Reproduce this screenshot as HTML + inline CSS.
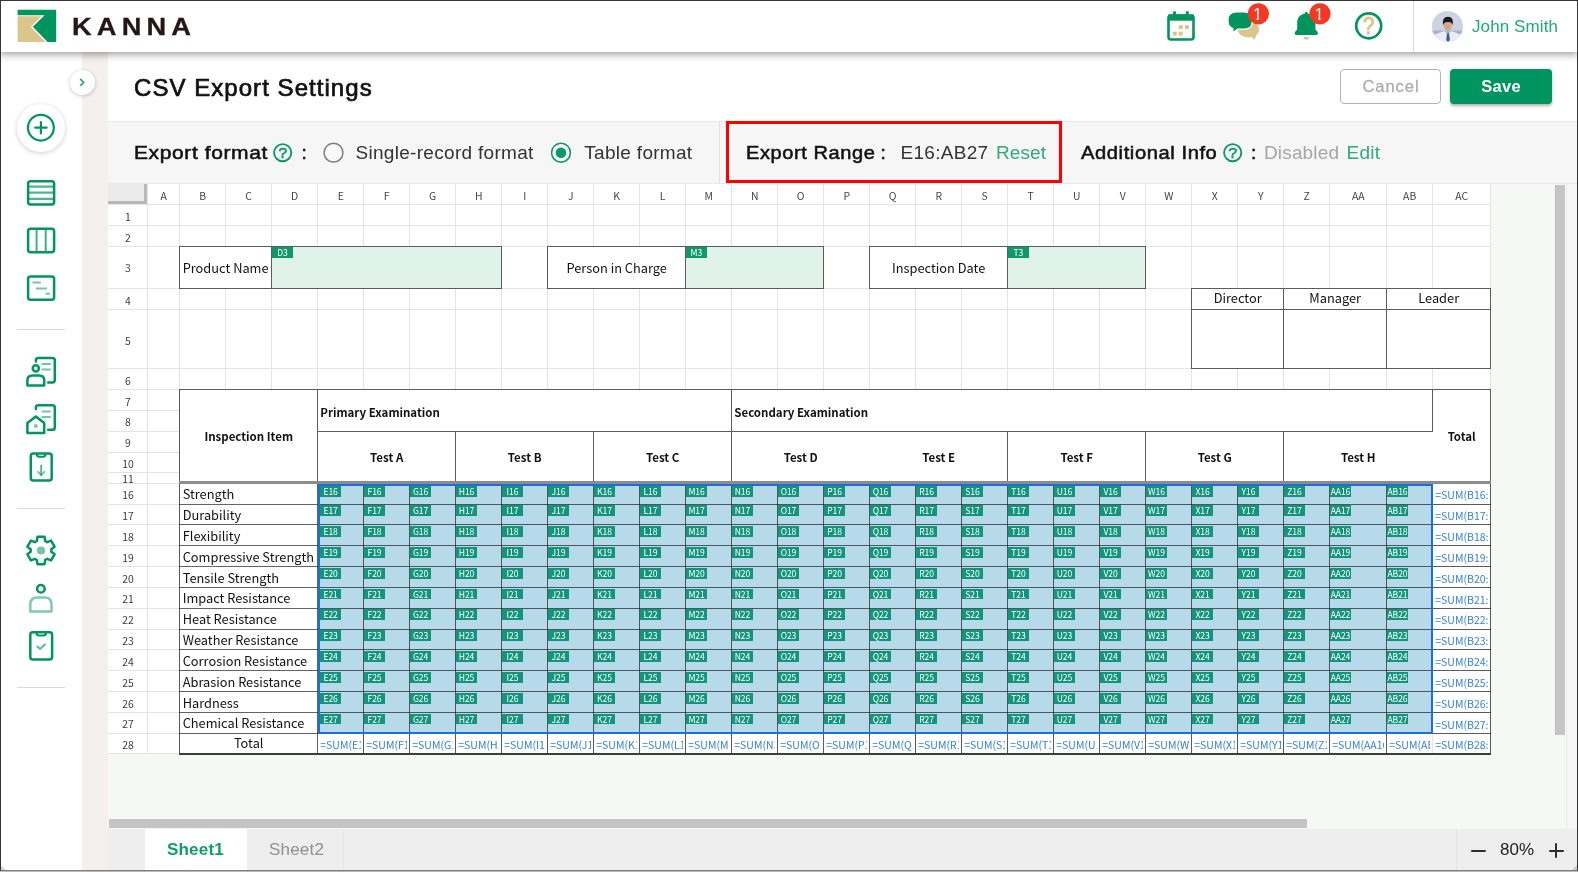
<!DOCTYPE html>
<html lang="en"><head><meta charset="utf-8"><title>CSV Export Settings</title>
<style>
*{box-sizing:border-box;margin:0;padding:0}
html,body{width:1578px;height:872px;overflow:hidden;background:#fff}
body{font-family:"Liberation Sans",sans-serif;color:#111}
#app{position:relative;width:1578px;height:872px;overflow:hidden;will-change:transform}
.abs{position:absolute}
/* frame border of screenshot */
#frame{position:absolute;left:0;top:0;width:1578px;height:871px;border:1px solid #353535;border-bottom-color:#7e7e7e;border-radius:0;z-index:100;pointer-events:none}
#frame2{position:absolute;left:0;top:871px;width:1578px;height:1px;background:#b9b9b9;z-index:99}
/* header */
#hdr{position:absolute;left:0;top:0;width:1578px;height:52px;background:#fff;box-shadow:0 2px 8px rgba(0,0,0,.42);z-index:20}
#brand{position:absolute;left:72.4px;top:12px;font-weight:bold;font-size:24.8px;line-height:30px;letter-spacing:4.65px;transform:scaleX(1.1);transform-origin:0 0;-webkit-text-stroke:.3px #231815;color:#231815;white-space:nowrap}
#uname{position:absolute;left:1472px;top:15px;font-size:17px;line-height:24px;color:#1fab75;white-space:nowrap;letter-spacing:.1px}
#udiv{position:absolute;left:1413px;top:0;width:1px;height:52px;background:#d9d9d9}
/* sidebar */
#side{position:absolute;left:0;top:52px;width:82px;height:820px;background:#fff;z-index:5}
#band{position:absolute;left:82px;top:52px;width:26px;height:820px;background:#f3f0ed;z-index:4}
.sdiv{position:absolute;left:17px;width:48px;height:1px;background:#d9d9d9}
#tog{position:absolute;left:70px;top:70px;width:25px;height:25px;border-radius:50%;background:#fff;box-shadow:0 1px 4px rgba(0,0,0,.22);z-index:25}
#plus{position:absolute;left:17px;top:104px;width:48px;height:48px;border-radius:50%;background:#fff;box-shadow:0 1px 5px rgba(0,0,0,.2);z-index:6}
/* title */
#title{position:absolute;left:134px;top:71.6px;font-size:24px;line-height:32px;color:#111;white-space:nowrap;letter-spacing:1.05px;-webkit-text-stroke:.7px #111}
.btn{position:absolute;top:69px;height:35px;border-radius:4px;font-size:16.5px;line-height:34px;text-align:center;white-space:nowrap}
#cancel{left:1340px;width:101px;border:1px solid #b3b3b3;color:#adadad;background:#fff;-webkit-text-stroke:.3px #adadad;letter-spacing:.95px;line-height:32.6px;padding-left:1px}
#save{left:1450px;width:102px;background:#009560;color:#fff;font-weight:bold;box-shadow:0 2px 3px rgba(0,0,0,.3);letter-spacing:.3px}
/* toolbar */
#tb{position:absolute;left:108px;top:121px;width:1470px;height:63px;background:#f6f6f6;border-top:1.5px solid #e9e9e9;border-bottom:1px solid #e7e7e7}
.tl{position:absolute;top:139px;font-size:19px;line-height:28px;white-space:nowrap;letter-spacing:.3px;color:#333}
.tl.b{color:#111;-webkit-text-stroke:.55px #111;letter-spacing:.55px;transform-origin:0 50%}
.tl.g{color:#2eab77}
.tl.d{color:#a6a6a6}
#redbox{position:absolute;left:726px;top:121px;width:336px;height:62px;border:3px solid #ff0000}
#tbdiv{position:absolute;left:719px;top:122px;width:1px;height:62px;background:#e2e2e2}
/* grid */
#sheet{position:absolute;left:108px;top:184px;width:1470px;height:646px;background:#f6f8f6;overflow:hidden;font-family:"Noto Sans CJK JP","Liberation Sans",sans-serif}
#sheet .w{position:absolute;background:#fff}
.vl,.hl{position:absolute;background:#e4e4e4}
.ch{position:absolute;top:1px;height:21px;font-size:10.4px;line-height:22.4px;text-align:center;color:#444}
.rh{position:absolute;left:0;width:40px;font-size:10.4px;text-align:center;color:#3c3c3c}
.c{position:absolute;font-size:12.8px;color:#111;white-space:nowrap;overflow:hidden}
.c.s,.c[style*=bold]{font-size:11.5px}
.bx{position:absolute;border:1px solid #5c5c5c}
.lb{position:absolute;width:20.6px;height:10.8px;background:#0d9a68;color:#fff;font-size:8.6px;line-height:10.6px;white-space:nowrap;overflow:hidden;text-align:center;letter-spacing:-.1px}
.lb span{display:inline-block;margin:0 -6px}
.sel .lb{background:#12957a}
.fm{position:absolute;font-size:10.5px;color:#3583dc;white-space:nowrap;overflow:hidden}
.bl{position:absolute;background:rgba(20,20,20,.66)}
/* bottom */
#tabs{position:absolute;left:108px;top:829px;width:1470px;height:43px;background:#eeeeee}

</style></head>
<body>
<div id="app">
<!-- ===== header ===== -->
<div id="hdr">
  <svg class="abs" style="left:17px;top:9px" width="40" height="34" viewBox="17 9 40 34">
    <polygon points="17.6,9.8 56.2,9.8 56.2,41.9 47.6,41.9 32.8,26.7 44.6,15.3 17.6,15.3" fill="#00945e"/>
    <polygon points="17.6,16.3 41.4,16.3 30.8,26.7 45.5,41.9 17.6,41.9" fill="#dcc58b"/>
  </svg>
  <div id="brand">KANNA</div>

  <!-- calendar -->
  <svg class="abs" style="left:1165px;top:9px" width="32" height="34" viewBox="1165 9 32 34">
    <rect x="1168.5" y="15.5" width="25" height="24" rx="2.5" fill="#fff" stroke="#00955f" stroke-width="2.6"/>
    <rect x="1168" y="14.5" width="26" height="6.2" fill="#00955f"/>
    <rect x="1173" y="11.3" width="3" height="5" rx="1" fill="#00955f"/>
    <rect x="1185.8" y="11.3" width="3" height="5" rx="1" fill="#00955f"/>
    <rect x="1178.8" y="25.2" width="3.9" height="3.9" fill="#dcc58b"/>
    <rect x="1185" y="25.2" width="3.9" height="3.9" fill="#dcc58b"/>
    <rect x="1172.8" y="31.7" width="3.9" height="3.9" fill="#dcc58b"/>
    <rect x="1178.8" y="31.7" width="3.9" height="3.9" fill="#dcc58b"/>
  </svg>
  <!-- chat -->
  <svg class="abs" style="left:1225px;top:2px" width="46" height="44" viewBox="1225 2 46 44">
    <path d="M1248.5 21.6 C1254.4 21.6 1259.2 25.1 1259.2 29.5 C1259.2 31.8 1258 33.8 1256.2 35.2 L1254.7 39.7 L1251.6 37.1 C1250.6 37.3 1249.6 37.4 1248.5 37.4 C1242.6 37.4 1237.8 33.9 1237.8 29.5 C1237.8 25.1 1242.6 21.6 1248.5 21.6 Z" fill="#dcc58b"/>
    <path d="M1236.4 11.9 H1244.2 C1249.6 11.9 1252.3 15.2 1252.3 19.2 V21.8 C1252.3 25.8 1249.6 29.1 1244.2 29.1 H1237.8 L1232.5 32.7 L1232.9 28.5 C1229.6 27.4 1228 24.8 1228 21.8 V19.2 C1228 15.2 1231 11.9 1236.4 11.9 Z" fill="#00955f" stroke="#fff" stroke-width="1.3"/>
    <circle cx="1258.4" cy="13.8" r="10.6" fill="#f23a22"/>
    <clipPath id="k1"><path d="M1250 5 H1266 V18.2 H1258.9 V21 H1256.5 V18.2 H1250 Z"/></clipPath><text x="1257.6" y="19.9" font-family="'Liberation Sans',sans-serif" font-size="15.8" fill="#fff" text-anchor="middle" clip-path="url(#k1)">1</text>
  </svg>
  <!-- bell -->
  <svg class="abs" style="left:1290px;top:2px" width="44" height="44" viewBox="1290 2 44 44">
    <path d="M1303.3 37 H1309.3 C1309.3 38.6 1308 39.7 1306.3 39.7 C1304.6 39.7 1303.3 38.6 1303.3 37 Z" fill="#dcc58b"/>
    <path d="M1304.9 13.6 C1304.9 12.4 1305.5 11.7 1306.3 11.7 C1307.1 11.7 1307.7 12.4 1307.7 13.6 C1312.3 14.6 1315.4 17.8 1315.4 22.5 V28.5 C1315.4 29.8 1316.3 30.6 1317.2 31.6 C1318.3 32.8 1318.2 35.1 1316.2 35.1 H1296.4 C1294.4 35.1 1294.3 32.8 1295.4 31.6 C1296.3 30.6 1297.2 29.8 1297.2 28.5 V22.5 C1297.2 17.8 1300.3 14.6 1304.9 13.6 Z" fill="#00955f"/>
    <circle cx="1320" cy="13.8" r="10.6" fill="#f23a22"/>
    <clipPath id="k2"><path d="M1311 5 H1328 V18.2 H1320.5 V21 H1318.1 V18.2 H1311 Z"/></clipPath><text x="1319.2" y="19.9" font-family="'Liberation Sans',sans-serif" font-size="15.8" fill="#fff" text-anchor="middle" clip-path="url(#k2)">1</text>
  </svg>
  <!-- help -->
  <svg class="abs" style="left:1352px;top:9px" width="34" height="34" viewBox="1352 9 34 34">
    <circle cx="1368.7" cy="25.8" r="12.5" fill="#fff" stroke="#00955f" stroke-width="2.7"/>
    <text transform="translate(1368.8,34.3) scale(1,1.19)" x="0" y="0" font-family="'Liberation Sans',sans-serif" font-size="20.5" fill="#dcc58b" stroke="#dcc58b" stroke-width=".8" text-anchor="middle">?</text>
  </svg>
  <div id="udiv"></div>
  <!-- avatar -->
  <svg class="abs" style="left:1431px;top:10px" width="33" height="33" viewBox="0 0 33 33">
    <defs><clipPath id="avc"><circle cx="16.4" cy="16.5" r="15.5"/></clipPath></defs>
    <g clip-path="url(#avc)">
      <rect x="0" y="0" width="33" height="33" fill="#cdd2e0"/>
      <rect x="0" y="20.6" width="33" height="3.4" fill="#9db4d2"/>
      <path d="M1 33 L3 25.4 C6 22.9 10.4 22.6 13.4 21 L16.9 24.4 L20.4 21 C23.4 22.6 27 22.9 30 25.4 L32 33 Z" fill="#e9ecf2"/>
      <path d="M16 23.2 L18 23.2 L18.9 30 L17 32 L15.2 30 Z" fill="#3d5a9a"/>
      <ellipse cx="16.8" cy="15.9" rx="3.8" ry="4.6" fill="#d6a488"/>
      <path d="M12.3 15.6 C10.9 10 13.2 6.8 17 6.8 C20.8 6.8 22.8 10 21.5 15.6 C21 13.2 20.2 11.8 17 12 C13.8 11.8 12.9 13.2 12.3 15.6 Z" fill="#1c1a1d"/>
    </g>
  </svg>
  <div id="uname">John Smith</div>
</div>

<!-- ===== sidebar ===== -->
<div id="side"></div>
<div id="band"></div>
<div id="tog"><svg width="25" height="25" viewBox="0 0 25 25"><path d="M10.6 9.3 L13.8 12.3 L10.6 15.3" fill="none" stroke="#2aa574" stroke-width="1.6" stroke-linecap="round" stroke-linejoin="round"/></svg></div>
<div id="plus"><svg width="48" height="48" viewBox="0 0 48 48"><circle cx="23.9" cy="23.7" r="12.9" fill="none" stroke="#00955f" stroke-width="2.2"/><path d="M18.2 23.7 H29.6 M23.9 18 V29.4" stroke="#00955f" stroke-width="2.2" stroke-linecap="round"/></svg></div>

<svg class="abs" style="left:0;top:170px;z-index:6" width="82" height="530" viewBox="0 170 82 530" fill="none" stroke="#00955f" stroke-width="2.5" stroke-linejoin="round" stroke-linecap="round">
  <!-- list -->
  <rect x="28.1" y="181.2" width="26" height="23.3" rx="2.5"/>
  <g stroke-width="2.3" opacity=".7" stroke-linecap="butt"><path d="M29 186.6 H53 M29 192.7 H53 M29 198.9 H53"/></g>
  <!-- columns -->
  <rect x="28.1" y="228.7" width="26" height="23.6" rx="2.5"/>
  <g stroke-width="2" opacity=".75" stroke-linecap="butt"><path d="M36.6 229.5 V251.5 M45.7 229.5 V251.5"/></g>
  <!-- gantt -->
  <rect x="28.1" y="276.4" width="26" height="23.3" rx="2.5"/>
  <g stroke-width="2" opacity=".55" stroke-linecap="butt"><path d="M32.5 282.4 H40.8 M36 288.4 H46.8 M45.6 293.8 H49.9"/></g>
  <!-- person + doc -->
  <path d="M35.9 361.5 V360.3 Q35.9 357.9 38.3 357.9 H52.4 Q54.8 357.9 54.8 360.3 V380 Q54.8 382.4 52.4 382.4 H48.2"/>
  <g stroke-width="2" opacity=".55" stroke-linecap="butt"><path d="M41.6 364.1 H50.8 M41.6 369.6 H50.8"/></g>
  <circle cx="35.8" cy="368.3" r="3.1"/>
  <path d="M27.4 385.4 V380.4 Q27.4 375.4 32.4 375.4 H39.2 Q44.2 375.4 44.2 380.4 V385.4 Z"/>
  <!-- house + doc -->
  <path d="M35.9 408.9 V407.7 Q35.9 405.3 38.3 405.3 H52.4 Q54.8 405.3 54.8 407.7 V427.4 Q54.8 429.8 52.4 429.8 H48.2"/>
  <g stroke-width="2" opacity=".55" stroke-linecap="butt"><path d="M41.6 411.5 H50.8 M41.6 417 H50.8"/></g>
  <path d="M27.4 433 V423 L35.8 416.6 L44.2 423 V433 Z"/>
  <rect x="34.1" y="424.3" width="3.4" height="3.4" fill="#00955f" stroke="none" opacity=".55"/>
  <!-- clipboard down -->
  <rect x="30.8" y="453.5" width="20.9" height="27" rx="2.5"/>
  <path d="M36.8 454 Q36.8 456.8 39.4 456.8 H43 Q45.6 456.8 45.6 454" stroke-width="2"/>
  <path d="M41.2 465.5 V475" stroke-width="1.8" opacity=".7"/>
  <path d="M37.9 471.8 L41.2 475.2 L44.5 471.8" stroke-width="1.8" opacity=".55"/>
  <!-- gear -->
  <path d="M36.85 540.96 L37.47 536.85 L44.53 536.85 L45.15 540.96 L47.19 542.14 L51.06 540.62 L54.59 546.73 L51.33 549.32 L51.33 551.68 L54.59 554.27 L51.06 560.38 L47.19 558.86 L45.15 560.04 L44.53 564.15 L37.47 564.15 L36.85 560.04 L34.81 558.86 L30.94 560.38 L27.41 554.27 L30.67 551.68 L30.67 549.32 L27.41 546.73 L30.94 540.62 L34.81 542.14 Z"/>
  <circle cx="41" cy="550.5" r="4.1" fill="#00955f" stroke="none" opacity=".55"/>
  <!-- person -->
  <circle cx="40.9" cy="588.7" r="3.8"/>
  <path d="M30.3 611.5 V604.5 Q30.3 597.6 37.3 597.6 H44.5 Q51.5 597.6 51.5 604.5 V611.5 Z" opacity=".5"/>
  <!-- clipboard check -->
  <rect x="30.3" y="632.3" width="21.8" height="27.2" rx="2.5"/>
  <path d="M36.4 632.8 Q36.4 635.6 39 635.6 H43.4 Q46 635.6 46 632.8" stroke-width="2"/>
  <path d="M37.6 646.6 L40 649 L45 644.4" stroke-width="2.2" opacity=".6"/>
</svg>
<div class="sdiv" style="top:329px;z-index:6"></div>
<div class="sdiv" style="top:508px;z-index:6"></div>
<div class="sdiv" style="top:687px;z-index:6"></div>

<!-- ===== title ===== -->
<div id="title">CSV Export Settings</div>
<div id="cancel" class="btn">Cancel</div>
<div id="save" class="btn">Save</div>

<!-- ===== toolbar ===== -->
<div id="tb"></div>
<div id="tbdiv"></div>
<div class="tl b" style="left:134px;transform:scaleX(1.105)">Export format</div>
<svg class="abs" style="left:272px;top:142px" width="22" height="22" viewBox="0 0 22 22"><circle cx="10.7" cy="10.7" r="8.6" fill="none" stroke="#0b9a66" stroke-width="1.9"/><text x="10.8" y="16.2" font-family="'Liberation Sans',sans-serif" font-size="15.4" fill="#0b9a66" stroke="#0b9a66" stroke-width=".6" text-anchor="middle">?</text></svg>
<div class="tl b" style="left:301.5px">:</div>
<svg class="abs" style="left:322px;top:141px" width="24" height="24" viewBox="0 0 24 24"><circle cx="11.5" cy="11.7" r="9.4" fill="#f9f9f9" stroke="#7d7d7d" stroke-width="1.5"/></svg>
<div class="tl" style="left:355.5px">Single-record format</div>
<svg class="abs" style="left:549px;top:141px" width="24" height="24" viewBox="0 0 24 24"><circle cx="12" cy="11.7" r="9.4" fill="#fff" stroke="#0b9a66" stroke-width="1.6"/><circle cx="12" cy="11.7" r="5.3" fill="#0b9a66"/></svg>
<div class="tl" style="left:584.3px">Table format</div>
<div id="redbox"></div>
<div class="tl b" style="left:746.4px;transform:scaleX(1.055)">Export Range</div><div class="tl b" style="left:880.5px">:</div>
<div class="tl" style="left:900.5px">E16:AB27</div>
<div class="tl g" style="left:996px;letter-spacing:.1px">Reset</div>
<div class="tl b" style="left:1080.6px;transform:scaleX(1.06)">Additional Info</div>
<svg class="abs" style="left:1221.5px;top:142px" width="22" height="22" viewBox="0 0 22 22"><circle cx="10.7" cy="10.7" r="8.6" fill="none" stroke="#0b9a66" stroke-width="1.9"/><text x="10.8" y="16.2" font-family="'Liberation Sans',sans-serif" font-size="15.4" fill="#0b9a66" stroke="#0b9a66" stroke-width=".6" text-anchor="middle">?</text></svg>
<div class="tl b" style="left:1251px">:</div>
<div class="tl d" style="left:1264px;letter-spacing:.15px">Disabled</div>
<div class="tl g" style="left:1346.5px">Edit</div>
<div id="sheet">
<div class="w" style="left:0;top:0;width:1383px;height:570px"></div>
<div class="abs" style="left:0;top:0;width:40px;height:20.6px;background:#ebebeb;border-right:4px solid #b9b9bb;border-bottom:4px solid #b8b8b8"></div>
<div class="vl" style="left:71px;top:0;width:1px;height:570px"></div><div class="vl" style="left:117px;top:0;width:1px;height:570px"></div><div class="vl" style="left:163px;top:0;width:1px;height:570px"></div><div class="vl" style="left:209px;top:0;width:1px;height:570px"></div><div class="vl" style="left:255px;top:0;width:1px;height:570px"></div><div class="vl" style="left:301px;top:0;width:1px;height:570px"></div><div class="vl" style="left:347px;top:0;width:1px;height:570px"></div><div class="vl" style="left:393px;top:0;width:1px;height:570px"></div><div class="vl" style="left:439px;top:0;width:1px;height:570px"></div><div class="vl" style="left:485px;top:0;width:1px;height:570px"></div><div class="vl" style="left:531px;top:0;width:1px;height:570px"></div><div class="vl" style="left:577px;top:0;width:1px;height:570px"></div><div class="vl" style="left:623px;top:0;width:1px;height:570px"></div><div class="vl" style="left:669px;top:0;width:1px;height:570px"></div><div class="vl" style="left:715px;top:0;width:1px;height:570px"></div><div class="vl" style="left:761px;top:0;width:1px;height:570px"></div><div class="vl" style="left:807px;top:0;width:1px;height:570px"></div><div class="vl" style="left:853px;top:0;width:1px;height:570px"></div><div class="vl" style="left:899px;top:0;width:1px;height:570px"></div><div class="vl" style="left:945px;top:0;width:1px;height:570px"></div><div class="vl" style="left:991px;top:0;width:1px;height:570px"></div><div class="vl" style="left:1037px;top:0;width:1px;height:570px"></div><div class="vl" style="left:1083px;top:0;width:1px;height:570px"></div><div class="vl" style="left:1129px;top:0;width:1px;height:570px"></div><div class="vl" style="left:1175px;top:0;width:1px;height:570px"></div><div class="vl" style="left:1221px;top:0;width:1px;height:570px"></div><div class="vl" style="left:1278px;top:0;width:1px;height:570px"></div><div class="vl" style="left:1324px;top:0;width:1px;height:570px"></div><div class="vl" style="left:1382px;top:0;width:1px;height:570px"></div><div class="vl" style="left:39px;top:0;width:1px;height:570px"></div>
<div class="hl" style="left:0;top:20px;width:1383px;height:1px"></div><div class="hl" style="left:0;top:41px;width:1383px;height:1px"></div><div class="hl" style="left:0;top:62px;width:1383px;height:1px"></div><div class="hl" style="left:0;top:104px;width:1383px;height:1px"></div><div class="hl" style="left:0;top:125px;width:1383px;height:1px"></div><div class="hl" style="left:0;top:184px;width:1383px;height:1px"></div><div class="hl" style="left:0;top:205px;width:1383px;height:1px"></div><div class="hl" style="left:0;top:226px;width:1383px;height:1px"></div><div class="hl" style="left:0;top:247px;width:1383px;height:1px"></div><div class="hl" style="left:0;top:268px;width:1383px;height:1px"></div><div class="hl" style="left:0;top:288px;width:1383px;height:1px"></div><div class="hl" style="left:0;top:299px;width:1383px;height:1px"></div><div class="hl" style="left:0;top:320px;width:1383px;height:1px"></div><div class="hl" style="left:0;top:340px;width:1383px;height:1px"></div><div class="hl" style="left:0;top:361px;width:1383px;height:1px"></div><div class="hl" style="left:0;top:382px;width:1383px;height:1px"></div><div class="hl" style="left:0;top:403px;width:1383px;height:1px"></div><div class="hl" style="left:0;top:424px;width:1383px;height:1px"></div><div class="hl" style="left:0;top:445px;width:1383px;height:1px"></div><div class="hl" style="left:0;top:465px;width:1383px;height:1px"></div><div class="hl" style="left:0;top:486px;width:1383px;height:1px"></div><div class="hl" style="left:0;top:507px;width:1383px;height:1px"></div><div class="hl" style="left:0;top:528px;width:1383px;height:1px"></div><div class="hl" style="left:0;top:549px;width:1383px;height:1px"></div><div class="hl" style="left:0;top:569px;width:1383px;height:1px"></div>
<div class="ch" style="left:39.7px;width:32px">A</div><div class="ch" style="left:71.7px;width:46px">B</div><div class="ch" style="left:117.7px;width:46px">C</div><div class="ch" style="left:163.7px;width:46px">D</div><div class="ch" style="left:209.7px;width:46px">E</div><div class="ch" style="left:255.7px;width:46px">F</div><div class="ch" style="left:301.7px;width:46px">G</div><div class="ch" style="left:347.7px;width:46px">H</div><div class="ch" style="left:393.7px;width:46px">I</div><div class="ch" style="left:439.7px;width:46px">J</div><div class="ch" style="left:485.7px;width:46px">K</div><div class="ch" style="left:531.7px;width:46px">L</div><div class="ch" style="left:577.7px;width:46px">M</div><div class="ch" style="left:623.7px;width:46px">N</div><div class="ch" style="left:669.7px;width:46px">O</div><div class="ch" style="left:715.7px;width:46px">P</div><div class="ch" style="left:761.7px;width:46px">Q</div><div class="ch" style="left:807.7px;width:46px">R</div><div class="ch" style="left:853.7px;width:46px">S</div><div class="ch" style="left:899.7px;width:46px">T</div><div class="ch" style="left:945.7px;width:46px">U</div><div class="ch" style="left:991.7px;width:46px">V</div><div class="ch" style="left:1037.7px;width:46px">W</div><div class="ch" style="left:1083.7px;width:46px">X</div><div class="ch" style="left:1129.7px;width:46px">Y</div><div class="ch" style="left:1175.7px;width:46px">Z</div><div class="ch" style="left:1221.7px;width:57px">AA</div><div class="ch" style="left:1278.7px;width:46px">AB</div><div class="ch" style="left:1324.7px;width:58px">AC</div>
<div class="rh" style="top:20.8px;height:20.8px;line-height:23px">1</div><div class="rh" style="top:41.6px;height:20.8px;line-height:23px">2</div><div class="rh" style="top:62.4px;height:42.4px;line-height:44.6px">3</div><div class="rh" style="top:104.8px;height:20.8px;line-height:23px">4</div><div class="rh" style="top:125.6px;height:59.2px;line-height:61.4px">5</div><div class="rh" style="top:184.8px;height:20.8px;line-height:23px">6</div><div class="rh" style="top:205.6px;height:20.8px;line-height:23px">7</div><div class="rh" style="top:226.4px;height:20.8px;line-height:23px">8</div><div class="rh" style="top:247.2px;height:20.8px;line-height:23px">9</div><div class="rh" style="top:268px;height:20.8px;line-height:23px">10</div><div class="rh" style="top:288.8px;height:10.4px;line-height:12.6px;overflow:hidden">11</div><div class="rh" style="top:299.2px;height:20.83px;line-height:23.03px">16</div><div class="rh" style="top:320.03px;height:20.83px;line-height:23.03px">17</div><div class="rh" style="top:340.86px;height:20.83px;line-height:23.03px">18</div><div class="rh" style="top:361.69px;height:20.83px;line-height:23.03px">19</div><div class="rh" style="top:382.52px;height:20.83px;line-height:23.03px">20</div><div class="rh" style="top:403.35px;height:20.83px;line-height:23.03px">21</div><div class="rh" style="top:424.18px;height:20.83px;line-height:23.03px">22</div><div class="rh" style="top:445.01px;height:20.83px;line-height:23.03px">23</div><div class="rh" style="top:465.84px;height:20.83px;line-height:23.03px">24</div><div class="rh" style="top:486.67px;height:20.83px;line-height:23.03px">25</div><div class="rh" style="top:507.5px;height:20.83px;line-height:23.03px">26</div><div class="rh" style="top:528.33px;height:20.83px;line-height:23.03px">27</div><div class="rh" style="top:549.16px;height:20.83px;line-height:23.03px">28</div>
<div class="bx" style="left:71px;top:62px;width:93px;height:43px;background:#fff"></div><div class="bx" style="left:163px;top:62px;width:231px;height:43px;background:#dff3eb"></div><div class="c" style="left:71.7px;top:63.2px;width:92px;height:42.4px;line-height:42.4px;text-align:left;padding-left:3px">Product Name</div><div class="lb" style="left:164.1px;top:62.8px">D3</div><div class="bx" style="left:439px;top:62px;width:139px;height:43px;background:#fff"></div><div class="bx" style="left:577px;top:62px;width:139px;height:43px;background:#dff3eb"></div><div class="c" style="left:439.7px;top:63.2px;width:138px;height:42.4px;line-height:42.4px;text-align:center">Person in Charge</div><div class="lb" style="left:578.1px;top:62.8px">M3</div><div class="bx" style="left:761px;top:62px;width:139px;height:43px;background:#fff"></div><div class="bx" style="left:899px;top:62px;width:139px;height:43px;background:#dff3eb"></div><div class="c" style="left:761.7px;top:63.2px;width:138px;height:42.4px;line-height:42.4px;text-align:center">Inspection Date</div><div class="lb" style="left:900.1px;top:62.8px">T3</div>
<div class="bx" style="left:1083px;top:104px;width:93px;height:22px;background:#fff"></div><div class="bx" style="left:1083px;top:125px;width:93px;height:60px;background:#fff"></div><div class="c" style="left:1083.7px;top:104.2px;width:92px;height:20.8px;line-height:20.8px;text-align:center">Director</div><div class="bx" style="left:1175px;top:104px;width:104px;height:22px;background:#fff"></div><div class="bx" style="left:1175px;top:125px;width:104px;height:60px;background:#fff"></div><div class="c" style="left:1175.7px;top:104.2px;width:103px;height:20.8px;line-height:20.8px;text-align:center">Manager</div><div class="bx" style="left:1278px;top:104px;width:105px;height:22px;background:#fff"></div><div class="bx" style="left:1278px;top:125px;width:105px;height:60px;background:#fff"></div><div class="c" style="left:1278.7px;top:104.2px;width:104px;height:20.8px;line-height:20.8px;text-align:center">Leader</div>
<div class="bx" style="left:71px;top:205px;width:139px;height:95px;background:#fff"></div><div class="c" style="left:71.7px;top:205.6px;width:138px;height:93.6px;line-height:93.6px;text-align:center;font-weight:bold">Inspection Item</div><div class="bx" style="left:209px;top:205px;width:415px;height:43px;background:#fff"></div><div class="c s" style="left:209.7px;top:207.6px;width:414px;height:41.6px;line-height:41.6px;text-align:left;padding-left:2.6px;font-weight:bold">Primary Examination</div><div class="bx" style="left:623px;top:205px;width:702px;height:43px;background:#fff"></div><div class="c s" style="left:623.7px;top:207.6px;width:701px;height:41.6px;line-height:41.6px;text-align:left;padding-left:2.6px;font-weight:bold">Secondary Examination</div><div class="bx" style="left:209px;top:247px;width:139px;height:53px;background:#fff"></div><div class="c s" style="left:209.7px;top:247.2px;width:138px;height:52px;line-height:52px;text-align:center;font-weight:bold">Test A</div><div class="bx" style="left:347px;top:247px;width:139px;height:53px;background:#fff"></div><div class="c s" style="left:347.7px;top:247.2px;width:138px;height:52px;line-height:52px;text-align:center;font-weight:bold">Test B</div><div class="bx" style="left:485px;top:247px;width:139px;height:53px;background:#fff"></div><div class="c s" style="left:485.7px;top:247.2px;width:138px;height:52px;line-height:52px;text-align:center;font-weight:bold">Test C</div><div class="bx" style="left:623px;top:247px;width:277px;height:53px;background:#fff"></div><div class="c s" style="left:623.7px;top:247.2px;width:138px;height:52px;line-height:52px;text-align:center;font-weight:bold">Test D</div><div class="c s" style="left:761.7px;top:247.2px;width:138px;height:52px;line-height:52px;text-align:center;font-weight:bold">Test E</div><div class="bx" style="left:899px;top:247px;width:139px;height:53px;background:#fff"></div><div class="c s" style="left:899.7px;top:247.2px;width:138px;height:52px;line-height:52px;text-align:center;font-weight:bold">Test F</div><div class="bx" style="left:1037px;top:247px;width:139px;height:53px;background:#fff"></div><div class="c s" style="left:1037.7px;top:247.2px;width:138px;height:52px;line-height:52px;text-align:center;font-weight:bold">Test G</div><div class="bx" style="left:1175px;top:247px;width:150px;height:53px;background:#fff;border-right:none"></div><div class="c s" style="left:1175.7px;top:247.2px;width:149px;height:52px;line-height:52px;text-align:center;font-weight:bold">Test H</div><div class="bx" style="left:1324px;top:205px;width:59px;height:95px;background:#fff;border-left:none"></div><div class="abs" style="left:1324px;top:205px;width:1px;height:43px;background:#5c5c5c"></div><div class="c s" style="left:1324.7px;top:205.6px;width:58px;height:93.6px;line-height:93.6px;text-align:center;font-weight:bold">Total</div>
<div class="abs" style="left:210px;top:299px;width:1115px;height:250px;background:#b6daea"></div>
<div class="abs" style="left:72px;top:299px;width:138px;height:271px;background:#fff"></div>
<div class="bl" style="left:71px;top:320px;width:1312px;height:1px"></div><div class="bl" style="left:71px;top:340px;width:1312px;height:1px"></div><div class="bl" style="left:71px;top:361px;width:1312px;height:1px"></div><div class="bl" style="left:71px;top:382px;width:1312px;height:1px"></div><div class="bl" style="left:71px;top:403px;width:1312px;height:1px"></div><div class="bl" style="left:71px;top:424px;width:1312px;height:1px"></div><div class="bl" style="left:71px;top:445px;width:1312px;height:1px"></div><div class="bl" style="left:71px;top:465px;width:1312px;height:1px"></div><div class="bl" style="left:71px;top:486px;width:1312px;height:1px"></div><div class="bl" style="left:71px;top:507px;width:1312px;height:1px"></div><div class="bl" style="left:71px;top:528px;width:1312px;height:1px"></div><div class="bl" style="left:71px;top:549px;width:1312px;height:1px"></div><div class="bl" style="left:71px;top:569px;width:1312px;height:1px"></div>
<div class="bl" style="left:71px;top:299px;width:1px;height:271px"></div><div class="bl" style="left:209px;top:299px;width:1px;height:271px"></div><div class="bl" style="left:255px;top:299px;width:1px;height:271px"></div><div class="bl" style="left:301px;top:299px;width:1px;height:271px"></div><div class="bl" style="left:347px;top:299px;width:1px;height:271px"></div><div class="bl" style="left:393px;top:299px;width:1px;height:271px"></div><div class="bl" style="left:439px;top:299px;width:1px;height:271px"></div><div class="bl" style="left:485px;top:299px;width:1px;height:271px"></div><div class="bl" style="left:531px;top:299px;width:1px;height:271px"></div><div class="bl" style="left:577px;top:299px;width:1px;height:271px"></div><div class="bl" style="left:623px;top:299px;width:1px;height:271px"></div><div class="bl" style="left:669px;top:299px;width:1px;height:271px"></div><div class="bl" style="left:715px;top:299px;width:1px;height:271px"></div><div class="bl" style="left:761px;top:299px;width:1px;height:271px"></div><div class="bl" style="left:807px;top:299px;width:1px;height:271px"></div><div class="bl" style="left:853px;top:299px;width:1px;height:271px"></div><div class="bl" style="left:899px;top:299px;width:1px;height:271px"></div><div class="bl" style="left:945px;top:299px;width:1px;height:271px"></div><div class="bl" style="left:991px;top:299px;width:1px;height:271px"></div><div class="bl" style="left:1037px;top:299px;width:1px;height:271px"></div><div class="bl" style="left:1083px;top:299px;width:1px;height:271px"></div><div class="bl" style="left:1129px;top:299px;width:1px;height:271px"></div><div class="bl" style="left:1175px;top:299px;width:1px;height:271px"></div><div class="bl" style="left:1221px;top:299px;width:1px;height:271px"></div><div class="bl" style="left:1278px;top:299px;width:1px;height:271px"></div><div class="bl" style="left:1324px;top:299px;width:1px;height:251px"></div><div class="bl" style="left:1382px;top:299px;width:1px;height:271px"></div>
<div class="abs" style="left:71px;top:297.3px;width:1312px;height:2.4px;background:#8c8c8c"></div>
<div class="abs" style="left:71px;top:569.19px;width:1312px;height:2px;background:#3c3c3c"></div>
<div class="c" style="left:71.7px;top:300.2px;width:138px;height:20.83px;line-height:20.83px;text-align:left;padding-left:3px">Strength</div>
<div class="sel"><div class="lb" style="left:212.3px;top:302.1px"><span>E16</span></div><div class="lb" style="left:256.2px;top:302.1px"><span>F16</span></div><div class="lb" style="left:302.2px;top:302.1px"><span>G16</span></div><div class="lb" style="left:348.2px;top:302.1px"><span>H16</span></div><div class="lb" style="left:394.2px;top:302.1px"><span>I16</span></div><div class="lb" style="left:440.2px;top:302.1px"><span>J16</span></div><div class="lb" style="left:486.2px;top:302.1px"><span>K16</span></div><div class="lb" style="left:532.2px;top:302.1px"><span>L16</span></div><div class="lb" style="left:578.2px;top:302.1px"><span>M16</span></div><div class="lb" style="left:624.2px;top:302.1px"><span>N16</span></div><div class="lb" style="left:670.2px;top:302.1px"><span>O16</span></div><div class="lb" style="left:716.2px;top:302.1px"><span>P16</span></div><div class="lb" style="left:762.2px;top:302.1px"><span>Q16</span></div><div class="lb" style="left:808.2px;top:302.1px"><span>R16</span></div><div class="lb" style="left:854.2px;top:302.1px"><span>S16</span></div><div class="lb" style="left:900.2px;top:302.1px"><span>T16</span></div><div class="lb" style="left:946.2px;top:302.1px"><span>U16</span></div><div class="lb" style="left:992.2px;top:302.1px"><span>V16</span></div><div class="lb" style="left:1038.2px;top:302.1px"><span>W16</span></div><div class="lb" style="left:1084.2px;top:302.1px"><span>X16</span></div><div class="lb" style="left:1130.2px;top:302.1px"><span>Y16</span></div><div class="lb" style="left:1176.2px;top:302.1px"><span>Z16</span></div><div class="lb" style="left:1222.2px;top:302.1px"><span>AA16</span></div><div class="lb" style="left:1279.2px;top:302.1px"><span>AB16</span></div></div>
<div class="fm" style="left:1324.7px;top:301.4px;width:55.2px;height:20.83px;line-height:20.83px;text-align:left;padding-left:2.6px">=SUM(B16:AC16)</div><div class="c" style="left:71.7px;top:321.03px;width:138px;height:20.83px;line-height:20.83px;text-align:left;padding-left:3px">Durability</div>
<div class="sel"><div class="lb" style="left:212.3px;top:321.33px"><span>E17</span></div><div class="lb" style="left:256.2px;top:321.33px"><span>F17</span></div><div class="lb" style="left:302.2px;top:321.33px"><span>G17</span></div><div class="lb" style="left:348.2px;top:321.33px"><span>H17</span></div><div class="lb" style="left:394.2px;top:321.33px"><span>I17</span></div><div class="lb" style="left:440.2px;top:321.33px"><span>J17</span></div><div class="lb" style="left:486.2px;top:321.33px"><span>K17</span></div><div class="lb" style="left:532.2px;top:321.33px"><span>L17</span></div><div class="lb" style="left:578.2px;top:321.33px"><span>M17</span></div><div class="lb" style="left:624.2px;top:321.33px"><span>N17</span></div><div class="lb" style="left:670.2px;top:321.33px"><span>O17</span></div><div class="lb" style="left:716.2px;top:321.33px"><span>P17</span></div><div class="lb" style="left:762.2px;top:321.33px"><span>Q17</span></div><div class="lb" style="left:808.2px;top:321.33px"><span>R17</span></div><div class="lb" style="left:854.2px;top:321.33px"><span>S17</span></div><div class="lb" style="left:900.2px;top:321.33px"><span>T17</span></div><div class="lb" style="left:946.2px;top:321.33px"><span>U17</span></div><div class="lb" style="left:992.2px;top:321.33px"><span>V17</span></div><div class="lb" style="left:1038.2px;top:321.33px"><span>W17</span></div><div class="lb" style="left:1084.2px;top:321.33px"><span>X17</span></div><div class="lb" style="left:1130.2px;top:321.33px"><span>Y17</span></div><div class="lb" style="left:1176.2px;top:321.33px"><span>Z17</span></div><div class="lb" style="left:1222.2px;top:321.33px"><span>AA17</span></div><div class="lb" style="left:1279.2px;top:321.33px"><span>AB17</span></div></div>
<div class="fm" style="left:1324.7px;top:322.23px;width:55.2px;height:20.83px;line-height:20.83px;text-align:left;padding-left:2.6px">=SUM(B17:AC17)</div><div class="c" style="left:71.7px;top:341.86px;width:138px;height:20.83px;line-height:20.83px;text-align:left;padding-left:3px">Flexibility</div>
<div class="sel"><div class="lb" style="left:212.3px;top:342.16px"><span>E18</span></div><div class="lb" style="left:256.2px;top:342.16px"><span>F18</span></div><div class="lb" style="left:302.2px;top:342.16px"><span>G18</span></div><div class="lb" style="left:348.2px;top:342.16px"><span>H18</span></div><div class="lb" style="left:394.2px;top:342.16px"><span>I18</span></div><div class="lb" style="left:440.2px;top:342.16px"><span>J18</span></div><div class="lb" style="left:486.2px;top:342.16px"><span>K18</span></div><div class="lb" style="left:532.2px;top:342.16px"><span>L18</span></div><div class="lb" style="left:578.2px;top:342.16px"><span>M18</span></div><div class="lb" style="left:624.2px;top:342.16px"><span>N18</span></div><div class="lb" style="left:670.2px;top:342.16px"><span>O18</span></div><div class="lb" style="left:716.2px;top:342.16px"><span>P18</span></div><div class="lb" style="left:762.2px;top:342.16px"><span>Q18</span></div><div class="lb" style="left:808.2px;top:342.16px"><span>R18</span></div><div class="lb" style="left:854.2px;top:342.16px"><span>S18</span></div><div class="lb" style="left:900.2px;top:342.16px"><span>T18</span></div><div class="lb" style="left:946.2px;top:342.16px"><span>U18</span></div><div class="lb" style="left:992.2px;top:342.16px"><span>V18</span></div><div class="lb" style="left:1038.2px;top:342.16px"><span>W18</span></div><div class="lb" style="left:1084.2px;top:342.16px"><span>X18</span></div><div class="lb" style="left:1130.2px;top:342.16px"><span>Y18</span></div><div class="lb" style="left:1176.2px;top:342.16px"><span>Z18</span></div><div class="lb" style="left:1222.2px;top:342.16px"><span>AA18</span></div><div class="lb" style="left:1279.2px;top:342.16px"><span>AB18</span></div></div>
<div class="fm" style="left:1324.7px;top:343.06px;width:55.2px;height:20.83px;line-height:20.83px;text-align:left;padding-left:2.6px">=SUM(B18:AC18)</div><div class="c" style="left:71.7px;top:362.69px;width:138px;height:20.83px;line-height:20.83px;text-align:left;padding-left:3px">Compressive Strength</div>
<div class="sel"><div class="lb" style="left:212.3px;top:362.99px"><span>E19</span></div><div class="lb" style="left:256.2px;top:362.99px"><span>F19</span></div><div class="lb" style="left:302.2px;top:362.99px"><span>G19</span></div><div class="lb" style="left:348.2px;top:362.99px"><span>H19</span></div><div class="lb" style="left:394.2px;top:362.99px"><span>I19</span></div><div class="lb" style="left:440.2px;top:362.99px"><span>J19</span></div><div class="lb" style="left:486.2px;top:362.99px"><span>K19</span></div><div class="lb" style="left:532.2px;top:362.99px"><span>L19</span></div><div class="lb" style="left:578.2px;top:362.99px"><span>M19</span></div><div class="lb" style="left:624.2px;top:362.99px"><span>N19</span></div><div class="lb" style="left:670.2px;top:362.99px"><span>O19</span></div><div class="lb" style="left:716.2px;top:362.99px"><span>P19</span></div><div class="lb" style="left:762.2px;top:362.99px"><span>Q19</span></div><div class="lb" style="left:808.2px;top:362.99px"><span>R19</span></div><div class="lb" style="left:854.2px;top:362.99px"><span>S19</span></div><div class="lb" style="left:900.2px;top:362.99px"><span>T19</span></div><div class="lb" style="left:946.2px;top:362.99px"><span>U19</span></div><div class="lb" style="left:992.2px;top:362.99px"><span>V19</span></div><div class="lb" style="left:1038.2px;top:362.99px"><span>W19</span></div><div class="lb" style="left:1084.2px;top:362.99px"><span>X19</span></div><div class="lb" style="left:1130.2px;top:362.99px"><span>Y19</span></div><div class="lb" style="left:1176.2px;top:362.99px"><span>Z19</span></div><div class="lb" style="left:1222.2px;top:362.99px"><span>AA19</span></div><div class="lb" style="left:1279.2px;top:362.99px"><span>AB19</span></div></div>
<div class="fm" style="left:1324.7px;top:363.89px;width:55.2px;height:20.83px;line-height:20.83px;text-align:left;padding-left:2.6px">=SUM(B19:AC19)</div><div class="c" style="left:71.7px;top:383.52px;width:138px;height:20.83px;line-height:20.83px;text-align:left;padding-left:3px">Tensile Strength</div>
<div class="sel"><div class="lb" style="left:212.3px;top:383.82px"><span>E20</span></div><div class="lb" style="left:256.2px;top:383.82px"><span>F20</span></div><div class="lb" style="left:302.2px;top:383.82px"><span>G20</span></div><div class="lb" style="left:348.2px;top:383.82px"><span>H20</span></div><div class="lb" style="left:394.2px;top:383.82px"><span>I20</span></div><div class="lb" style="left:440.2px;top:383.82px"><span>J20</span></div><div class="lb" style="left:486.2px;top:383.82px"><span>K20</span></div><div class="lb" style="left:532.2px;top:383.82px"><span>L20</span></div><div class="lb" style="left:578.2px;top:383.82px"><span>M20</span></div><div class="lb" style="left:624.2px;top:383.82px"><span>N20</span></div><div class="lb" style="left:670.2px;top:383.82px"><span>O20</span></div><div class="lb" style="left:716.2px;top:383.82px"><span>P20</span></div><div class="lb" style="left:762.2px;top:383.82px"><span>Q20</span></div><div class="lb" style="left:808.2px;top:383.82px"><span>R20</span></div><div class="lb" style="left:854.2px;top:383.82px"><span>S20</span></div><div class="lb" style="left:900.2px;top:383.82px"><span>T20</span></div><div class="lb" style="left:946.2px;top:383.82px"><span>U20</span></div><div class="lb" style="left:992.2px;top:383.82px"><span>V20</span></div><div class="lb" style="left:1038.2px;top:383.82px"><span>W20</span></div><div class="lb" style="left:1084.2px;top:383.82px"><span>X20</span></div><div class="lb" style="left:1130.2px;top:383.82px"><span>Y20</span></div><div class="lb" style="left:1176.2px;top:383.82px"><span>Z20</span></div><div class="lb" style="left:1222.2px;top:383.82px"><span>AA20</span></div><div class="lb" style="left:1279.2px;top:383.82px"><span>AB20</span></div></div>
<div class="fm" style="left:1324.7px;top:384.72px;width:55.2px;height:20.83px;line-height:20.83px;text-align:left;padding-left:2.6px">=SUM(B20:AC20)</div><div class="c" style="left:71.7px;top:404.35px;width:138px;height:20.83px;line-height:20.83px;text-align:left;padding-left:3px">Impact Resistance</div>
<div class="sel"><div class="lb" style="left:212.3px;top:404.65px"><span>E21</span></div><div class="lb" style="left:256.2px;top:404.65px"><span>F21</span></div><div class="lb" style="left:302.2px;top:404.65px"><span>G21</span></div><div class="lb" style="left:348.2px;top:404.65px"><span>H21</span></div><div class="lb" style="left:394.2px;top:404.65px"><span>I21</span></div><div class="lb" style="left:440.2px;top:404.65px"><span>J21</span></div><div class="lb" style="left:486.2px;top:404.65px"><span>K21</span></div><div class="lb" style="left:532.2px;top:404.65px"><span>L21</span></div><div class="lb" style="left:578.2px;top:404.65px"><span>M21</span></div><div class="lb" style="left:624.2px;top:404.65px"><span>N21</span></div><div class="lb" style="left:670.2px;top:404.65px"><span>O21</span></div><div class="lb" style="left:716.2px;top:404.65px"><span>P21</span></div><div class="lb" style="left:762.2px;top:404.65px"><span>Q21</span></div><div class="lb" style="left:808.2px;top:404.65px"><span>R21</span></div><div class="lb" style="left:854.2px;top:404.65px"><span>S21</span></div><div class="lb" style="left:900.2px;top:404.65px"><span>T21</span></div><div class="lb" style="left:946.2px;top:404.65px"><span>U21</span></div><div class="lb" style="left:992.2px;top:404.65px"><span>V21</span></div><div class="lb" style="left:1038.2px;top:404.65px"><span>W21</span></div><div class="lb" style="left:1084.2px;top:404.65px"><span>X21</span></div><div class="lb" style="left:1130.2px;top:404.65px"><span>Y21</span></div><div class="lb" style="left:1176.2px;top:404.65px"><span>Z21</span></div><div class="lb" style="left:1222.2px;top:404.65px"><span>AA21</span></div><div class="lb" style="left:1279.2px;top:404.65px"><span>AB21</span></div></div>
<div class="fm" style="left:1324.7px;top:405.55px;width:55.2px;height:20.83px;line-height:20.83px;text-align:left;padding-left:2.6px">=SUM(B21:AC21)</div><div class="c" style="left:71.7px;top:425.18px;width:138px;height:20.83px;line-height:20.83px;text-align:left;padding-left:3px">Heat Resistance</div>
<div class="sel"><div class="lb" style="left:212.3px;top:425.48px"><span>E22</span></div><div class="lb" style="left:256.2px;top:425.48px"><span>F22</span></div><div class="lb" style="left:302.2px;top:425.48px"><span>G22</span></div><div class="lb" style="left:348.2px;top:425.48px"><span>H22</span></div><div class="lb" style="left:394.2px;top:425.48px"><span>I22</span></div><div class="lb" style="left:440.2px;top:425.48px"><span>J22</span></div><div class="lb" style="left:486.2px;top:425.48px"><span>K22</span></div><div class="lb" style="left:532.2px;top:425.48px"><span>L22</span></div><div class="lb" style="left:578.2px;top:425.48px"><span>M22</span></div><div class="lb" style="left:624.2px;top:425.48px"><span>N22</span></div><div class="lb" style="left:670.2px;top:425.48px"><span>O22</span></div><div class="lb" style="left:716.2px;top:425.48px"><span>P22</span></div><div class="lb" style="left:762.2px;top:425.48px"><span>Q22</span></div><div class="lb" style="left:808.2px;top:425.48px"><span>R22</span></div><div class="lb" style="left:854.2px;top:425.48px"><span>S22</span></div><div class="lb" style="left:900.2px;top:425.48px"><span>T22</span></div><div class="lb" style="left:946.2px;top:425.48px"><span>U22</span></div><div class="lb" style="left:992.2px;top:425.48px"><span>V22</span></div><div class="lb" style="left:1038.2px;top:425.48px"><span>W22</span></div><div class="lb" style="left:1084.2px;top:425.48px"><span>X22</span></div><div class="lb" style="left:1130.2px;top:425.48px"><span>Y22</span></div><div class="lb" style="left:1176.2px;top:425.48px"><span>Z22</span></div><div class="lb" style="left:1222.2px;top:425.48px"><span>AA22</span></div><div class="lb" style="left:1279.2px;top:425.48px"><span>AB22</span></div></div>
<div class="fm" style="left:1324.7px;top:426.38px;width:55.2px;height:20.83px;line-height:20.83px;text-align:left;padding-left:2.6px">=SUM(B22:AC22)</div><div class="c" style="left:71.7px;top:446.01px;width:138px;height:20.83px;line-height:20.83px;text-align:left;padding-left:3px">Weather Resistance</div>
<div class="sel"><div class="lb" style="left:212.3px;top:446.31px"><span>E23</span></div><div class="lb" style="left:256.2px;top:446.31px"><span>F23</span></div><div class="lb" style="left:302.2px;top:446.31px"><span>G23</span></div><div class="lb" style="left:348.2px;top:446.31px"><span>H23</span></div><div class="lb" style="left:394.2px;top:446.31px"><span>I23</span></div><div class="lb" style="left:440.2px;top:446.31px"><span>J23</span></div><div class="lb" style="left:486.2px;top:446.31px"><span>K23</span></div><div class="lb" style="left:532.2px;top:446.31px"><span>L23</span></div><div class="lb" style="left:578.2px;top:446.31px"><span>M23</span></div><div class="lb" style="left:624.2px;top:446.31px"><span>N23</span></div><div class="lb" style="left:670.2px;top:446.31px"><span>O23</span></div><div class="lb" style="left:716.2px;top:446.31px"><span>P23</span></div><div class="lb" style="left:762.2px;top:446.31px"><span>Q23</span></div><div class="lb" style="left:808.2px;top:446.31px"><span>R23</span></div><div class="lb" style="left:854.2px;top:446.31px"><span>S23</span></div><div class="lb" style="left:900.2px;top:446.31px"><span>T23</span></div><div class="lb" style="left:946.2px;top:446.31px"><span>U23</span></div><div class="lb" style="left:992.2px;top:446.31px"><span>V23</span></div><div class="lb" style="left:1038.2px;top:446.31px"><span>W23</span></div><div class="lb" style="left:1084.2px;top:446.31px"><span>X23</span></div><div class="lb" style="left:1130.2px;top:446.31px"><span>Y23</span></div><div class="lb" style="left:1176.2px;top:446.31px"><span>Z23</span></div><div class="lb" style="left:1222.2px;top:446.31px"><span>AA23</span></div><div class="lb" style="left:1279.2px;top:446.31px"><span>AB23</span></div></div>
<div class="fm" style="left:1324.7px;top:447.21px;width:55.2px;height:20.83px;line-height:20.83px;text-align:left;padding-left:2.6px">=SUM(B23:AC23)</div><div class="c" style="left:71.7px;top:466.84px;width:138px;height:20.83px;line-height:20.83px;text-align:left;padding-left:3px">Corrosion Resistance</div>
<div class="sel"><div class="lb" style="left:212.3px;top:467.14px"><span>E24</span></div><div class="lb" style="left:256.2px;top:467.14px"><span>F24</span></div><div class="lb" style="left:302.2px;top:467.14px"><span>G24</span></div><div class="lb" style="left:348.2px;top:467.14px"><span>H24</span></div><div class="lb" style="left:394.2px;top:467.14px"><span>I24</span></div><div class="lb" style="left:440.2px;top:467.14px"><span>J24</span></div><div class="lb" style="left:486.2px;top:467.14px"><span>K24</span></div><div class="lb" style="left:532.2px;top:467.14px"><span>L24</span></div><div class="lb" style="left:578.2px;top:467.14px"><span>M24</span></div><div class="lb" style="left:624.2px;top:467.14px"><span>N24</span></div><div class="lb" style="left:670.2px;top:467.14px"><span>O24</span></div><div class="lb" style="left:716.2px;top:467.14px"><span>P24</span></div><div class="lb" style="left:762.2px;top:467.14px"><span>Q24</span></div><div class="lb" style="left:808.2px;top:467.14px"><span>R24</span></div><div class="lb" style="left:854.2px;top:467.14px"><span>S24</span></div><div class="lb" style="left:900.2px;top:467.14px"><span>T24</span></div><div class="lb" style="left:946.2px;top:467.14px"><span>U24</span></div><div class="lb" style="left:992.2px;top:467.14px"><span>V24</span></div><div class="lb" style="left:1038.2px;top:467.14px"><span>W24</span></div><div class="lb" style="left:1084.2px;top:467.14px"><span>X24</span></div><div class="lb" style="left:1130.2px;top:467.14px"><span>Y24</span></div><div class="lb" style="left:1176.2px;top:467.14px"><span>Z24</span></div><div class="lb" style="left:1222.2px;top:467.14px"><span>AA24</span></div><div class="lb" style="left:1279.2px;top:467.14px"><span>AB24</span></div></div>
<div class="fm" style="left:1324.7px;top:468.04px;width:55.2px;height:20.83px;line-height:20.83px;text-align:left;padding-left:2.6px">=SUM(B24:AC24)</div><div class="c" style="left:71.7px;top:487.67px;width:138px;height:20.83px;line-height:20.83px;text-align:left;padding-left:3px">Abrasion Resistance</div>
<div class="sel"><div class="lb" style="left:212.3px;top:487.97px"><span>E25</span></div><div class="lb" style="left:256.2px;top:487.97px"><span>F25</span></div><div class="lb" style="left:302.2px;top:487.97px"><span>G25</span></div><div class="lb" style="left:348.2px;top:487.97px"><span>H25</span></div><div class="lb" style="left:394.2px;top:487.97px"><span>I25</span></div><div class="lb" style="left:440.2px;top:487.97px"><span>J25</span></div><div class="lb" style="left:486.2px;top:487.97px"><span>K25</span></div><div class="lb" style="left:532.2px;top:487.97px"><span>L25</span></div><div class="lb" style="left:578.2px;top:487.97px"><span>M25</span></div><div class="lb" style="left:624.2px;top:487.97px"><span>N25</span></div><div class="lb" style="left:670.2px;top:487.97px"><span>O25</span></div><div class="lb" style="left:716.2px;top:487.97px"><span>P25</span></div><div class="lb" style="left:762.2px;top:487.97px"><span>Q25</span></div><div class="lb" style="left:808.2px;top:487.97px"><span>R25</span></div><div class="lb" style="left:854.2px;top:487.97px"><span>S25</span></div><div class="lb" style="left:900.2px;top:487.97px"><span>T25</span></div><div class="lb" style="left:946.2px;top:487.97px"><span>U25</span></div><div class="lb" style="left:992.2px;top:487.97px"><span>V25</span></div><div class="lb" style="left:1038.2px;top:487.97px"><span>W25</span></div><div class="lb" style="left:1084.2px;top:487.97px"><span>X25</span></div><div class="lb" style="left:1130.2px;top:487.97px"><span>Y25</span></div><div class="lb" style="left:1176.2px;top:487.97px"><span>Z25</span></div><div class="lb" style="left:1222.2px;top:487.97px"><span>AA25</span></div><div class="lb" style="left:1279.2px;top:487.97px"><span>AB25</span></div></div>
<div class="fm" style="left:1324.7px;top:488.87px;width:55.2px;height:20.83px;line-height:20.83px;text-align:left;padding-left:2.6px">=SUM(B25:AC25)</div><div class="c" style="left:71.7px;top:508.5px;width:138px;height:20.83px;line-height:20.83px;text-align:left;padding-left:3px">Hardness</div>
<div class="sel"><div class="lb" style="left:212.3px;top:508.8px"><span>E26</span></div><div class="lb" style="left:256.2px;top:508.8px"><span>F26</span></div><div class="lb" style="left:302.2px;top:508.8px"><span>G26</span></div><div class="lb" style="left:348.2px;top:508.8px"><span>H26</span></div><div class="lb" style="left:394.2px;top:508.8px"><span>I26</span></div><div class="lb" style="left:440.2px;top:508.8px"><span>J26</span></div><div class="lb" style="left:486.2px;top:508.8px"><span>K26</span></div><div class="lb" style="left:532.2px;top:508.8px"><span>L26</span></div><div class="lb" style="left:578.2px;top:508.8px"><span>M26</span></div><div class="lb" style="left:624.2px;top:508.8px"><span>N26</span></div><div class="lb" style="left:670.2px;top:508.8px"><span>O26</span></div><div class="lb" style="left:716.2px;top:508.8px"><span>P26</span></div><div class="lb" style="left:762.2px;top:508.8px"><span>Q26</span></div><div class="lb" style="left:808.2px;top:508.8px"><span>R26</span></div><div class="lb" style="left:854.2px;top:508.8px"><span>S26</span></div><div class="lb" style="left:900.2px;top:508.8px"><span>T26</span></div><div class="lb" style="left:946.2px;top:508.8px"><span>U26</span></div><div class="lb" style="left:992.2px;top:508.8px"><span>V26</span></div><div class="lb" style="left:1038.2px;top:508.8px"><span>W26</span></div><div class="lb" style="left:1084.2px;top:508.8px"><span>X26</span></div><div class="lb" style="left:1130.2px;top:508.8px"><span>Y26</span></div><div class="lb" style="left:1176.2px;top:508.8px"><span>Z26</span></div><div class="lb" style="left:1222.2px;top:508.8px"><span>AA26</span></div><div class="lb" style="left:1279.2px;top:508.8px"><span>AB26</span></div></div>
<div class="fm" style="left:1324.7px;top:509.7px;width:55.2px;height:20.83px;line-height:20.83px;text-align:left;padding-left:2.6px">=SUM(B26:AC26)</div><div class="c" style="left:71.7px;top:529.33px;width:138px;height:20.83px;line-height:20.83px;text-align:left;padding-left:3px">Chemical Resistance</div>
<div class="sel"><div class="lb" style="left:212.3px;top:529.63px"><span>E27</span></div><div class="lb" style="left:256.2px;top:529.63px"><span>F27</span></div><div class="lb" style="left:302.2px;top:529.63px"><span>G27</span></div><div class="lb" style="left:348.2px;top:529.63px"><span>H27</span></div><div class="lb" style="left:394.2px;top:529.63px"><span>I27</span></div><div class="lb" style="left:440.2px;top:529.63px"><span>J27</span></div><div class="lb" style="left:486.2px;top:529.63px"><span>K27</span></div><div class="lb" style="left:532.2px;top:529.63px"><span>L27</span></div><div class="lb" style="left:578.2px;top:529.63px"><span>M27</span></div><div class="lb" style="left:624.2px;top:529.63px"><span>N27</span></div><div class="lb" style="left:670.2px;top:529.63px"><span>O27</span></div><div class="lb" style="left:716.2px;top:529.63px"><span>P27</span></div><div class="lb" style="left:762.2px;top:529.63px"><span>Q27</span></div><div class="lb" style="left:808.2px;top:529.63px"><span>R27</span></div><div class="lb" style="left:854.2px;top:529.63px"><span>S27</span></div><div class="lb" style="left:900.2px;top:529.63px"><span>T27</span></div><div class="lb" style="left:946.2px;top:529.63px"><span>U27</span></div><div class="lb" style="left:992.2px;top:529.63px"><span>V27</span></div><div class="lb" style="left:1038.2px;top:529.63px"><span>W27</span></div><div class="lb" style="left:1084.2px;top:529.63px"><span>X27</span></div><div class="lb" style="left:1130.2px;top:529.63px"><span>Y27</span></div><div class="lb" style="left:1176.2px;top:529.63px"><span>Z27</span></div><div class="lb" style="left:1222.2px;top:529.63px"><span>AA27</span></div><div class="lb" style="left:1279.2px;top:529.63px"><span>AB27</span></div></div>
<div class="fm" style="left:1324.7px;top:530.53px;width:55.2px;height:20.83px;line-height:20.83px;text-align:left;padding-left:2.6px">=SUM(B27:AC27)</div>
<div class="c" style="left:71.7px;top:549.36px;width:138px;height:20.83px;line-height:20.83px;text-align:center">Total</div><div class="fm" style="left:209.7px;top:550.66px;width:43.2px;height:20.83px;line-height:20.83px;text-align:left;padding-left:2.6px">=SUM(E16:E27)</div><div class="fm" style="left:255.7px;top:550.66px;width:43.2px;height:20.83px;line-height:20.83px;text-align:left;padding-left:2.6px">=SUM(F16:F27)</div><div class="fm" style="left:301.7px;top:550.66px;width:43.2px;height:20.83px;line-height:20.83px;text-align:left;padding-left:2.6px">=SUM(G16:G27)</div><div class="fm" style="left:347.7px;top:550.66px;width:43.2px;height:20.83px;line-height:20.83px;text-align:left;padding-left:2.6px">=SUM(H16:H27)</div><div class="fm" style="left:393.7px;top:550.66px;width:43.2px;height:20.83px;line-height:20.83px;text-align:left;padding-left:2.6px">=SUM(I16:I27)</div><div class="fm" style="left:439.7px;top:550.66px;width:43.2px;height:20.83px;line-height:20.83px;text-align:left;padding-left:2.6px">=SUM(J16:J27)</div><div class="fm" style="left:485.7px;top:550.66px;width:43.2px;height:20.83px;line-height:20.83px;text-align:left;padding-left:2.6px">=SUM(K16:K27)</div><div class="fm" style="left:531.7px;top:550.66px;width:43.2px;height:20.83px;line-height:20.83px;text-align:left;padding-left:2.6px">=SUM(L16:L27)</div><div class="fm" style="left:577.7px;top:550.66px;width:43.2px;height:20.83px;line-height:20.83px;text-align:left;padding-left:2.6px">=SUM(M16:M27)</div><div class="fm" style="left:623.7px;top:550.66px;width:43.2px;height:20.83px;line-height:20.83px;text-align:left;padding-left:2.6px">=SUM(N16:N27)</div><div class="fm" style="left:669.7px;top:550.66px;width:43.2px;height:20.83px;line-height:20.83px;text-align:left;padding-left:2.6px">=SUM(O16:O27)</div><div class="fm" style="left:715.7px;top:550.66px;width:43.2px;height:20.83px;line-height:20.83px;text-align:left;padding-left:2.6px">=SUM(P16:P27)</div><div class="fm" style="left:761.7px;top:550.66px;width:43.2px;height:20.83px;line-height:20.83px;text-align:left;padding-left:2.6px">=SUM(Q16:Q27)</div><div class="fm" style="left:807.7px;top:550.66px;width:43.2px;height:20.83px;line-height:20.83px;text-align:left;padding-left:2.6px">=SUM(R16:R27)</div><div class="fm" style="left:853.7px;top:550.66px;width:43.2px;height:20.83px;line-height:20.83px;text-align:left;padding-left:2.6px">=SUM(S16:S27)</div><div class="fm" style="left:899.7px;top:550.66px;width:43.2px;height:20.83px;line-height:20.83px;text-align:left;padding-left:2.6px">=SUM(T16:T27)</div><div class="fm" style="left:945.7px;top:550.66px;width:43.2px;height:20.83px;line-height:20.83px;text-align:left;padding-left:2.6px">=SUM(U16:U27)</div><div class="fm" style="left:991.7px;top:550.66px;width:43.2px;height:20.83px;line-height:20.83px;text-align:left;padding-left:2.6px">=SUM(V16:V27)</div><div class="fm" style="left:1037.7px;top:550.66px;width:43.2px;height:20.83px;line-height:20.83px;text-align:left;padding-left:2.6px">=SUM(W16:W27)</div><div class="fm" style="left:1083.7px;top:550.66px;width:43.2px;height:20.83px;line-height:20.83px;text-align:left;padding-left:2.6px">=SUM(X16:X27)</div><div class="fm" style="left:1129.7px;top:550.66px;width:43.2px;height:20.83px;line-height:20.83px;text-align:left;padding-left:2.6px">=SUM(Y16:Y27)</div><div class="fm" style="left:1175.7px;top:550.66px;width:43.2px;height:20.83px;line-height:20.83px;text-align:left;padding-left:2.6px">=SUM(Z16:Z27)</div><div class="fm" style="left:1221.7px;top:550.66px;width:54.2px;height:20.83px;line-height:20.83px;text-align:left;padding-left:2.6px">=SUM(AA16:AA27)</div><div class="fm" style="left:1278.7px;top:550.66px;width:43.2px;height:20.83px;line-height:20.83px;text-align:left;padding-left:2.6px">=SUM(AB16:AB27)</div><div class="fm" style="left:1324.7px;top:550.66px;width:55.2px;height:20.83px;line-height:20.83px;text-align:left;padding-left:2.6px">=SUM(B28:AB28)</div>
<div class="abs" style="left:210px;top:300px;width:1115.4px;height:249.6px;border:2px solid #1a6fdd"></div>
<div class="abs" style="left:1458px;top:0;width:12px;height:646px;background:#f6f6f6;border-left:1px solid #ebebeb"></div>
<div class="abs" style="left:1447px;top:1.2px;width:10px;height:549.5px;background:#c5c5c5;border-left:1px solid #bcbcbc"></div>
<div class="abs" style="left:1px;top:634.5px;width:1198px;height:9.5px;background:#c4c4c4"></div>
</div>
<!-- ===== bottom tabs ===== -->
<div id="tabs">
  <div class="abs" style="left:37px;top:0;width:102px;height:43px;background:#fff"></div>
  <div class="abs" style="left:0;top:0;font-size:17px;line-height:42px;width:175px;padding-left:59px;color:#0f9d69;font-weight:bold;white-space:nowrap;letter-spacing:.2px">Sheet1</div>
  <div class="abs" style="left:161px;top:0;font-size:17px;line-height:42px;color:#8f8f8f;white-space:nowrap;letter-spacing:.2px">Sheet2</div>
  <div class="abs" style="left:235px;top:0;width:1px;height:43px;background:#e6e6e6"></div>
  <div class="abs" style="left:1347.6px;top:0;width:1.5px;height:43px;background:#e3e3e3"></div>
  <div class="abs" style="left:1362.8px;top:20.8px;width:15.2px;height:2.1px;background:#2e2e2e;border-radius:1px"></div>
  <div class="abs" style="left:1392px;top:0;font-size:17px;line-height:41px;color:#222;white-space:nowrap">80%</div>
  <div class="abs" style="left:1440.8px;top:20.8px;width:15.2px;height:2.1px;background:#2e2e2e;border-radius:1px"></div>
  <div class="abs" style="left:1447.05px;top:14.3px;width:2.1px;height:15px;background:#2e2e2e;border-radius:1px"></div>
</div>
<div id="frame2"></div>
<svg class="abs" style="left:0;top:864px;z-index:101" width="1578" height="8" viewBox="0 0 1578 8"><polygon points="1,2 1,6 6,6" fill="#d5d5d5"/><polygon points="1577,1 1577,6 1572,6" fill="#c9c9c9"/></svg>
<div id="frame"></div>
</div>
</body></html>
